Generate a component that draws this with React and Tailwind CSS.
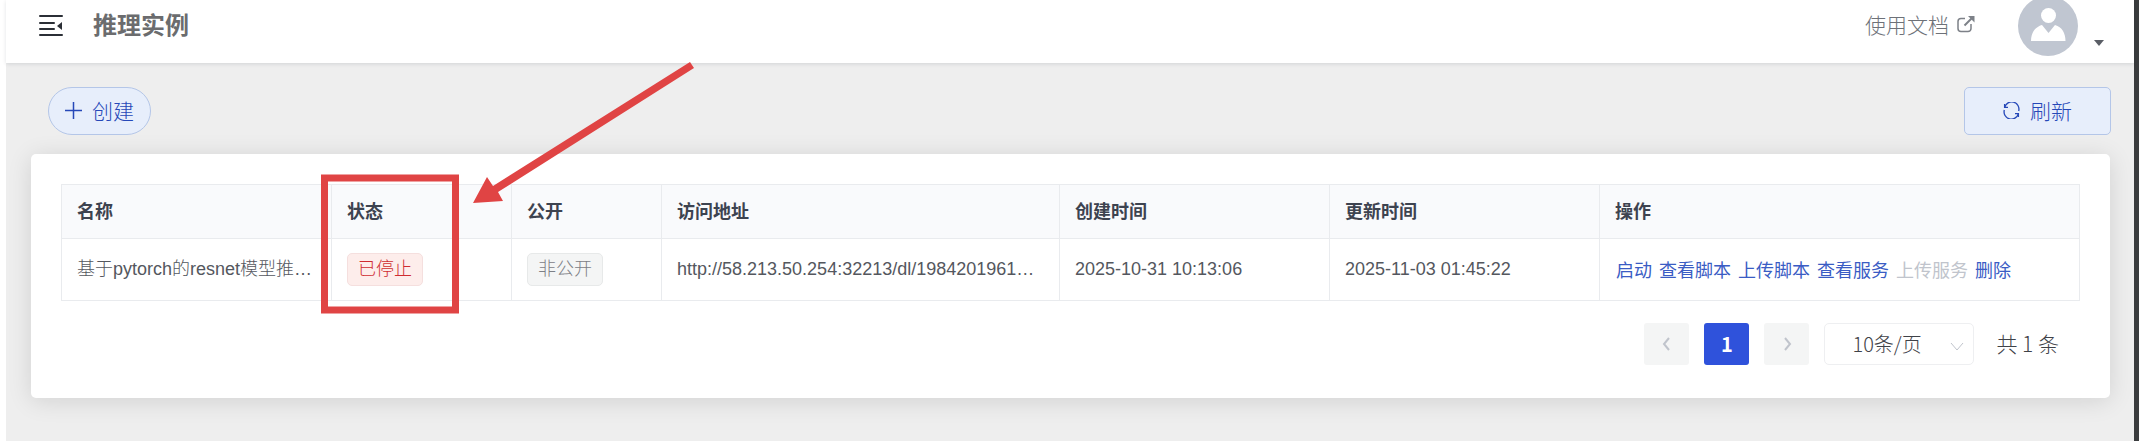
import React, { useState } from 'react';

const COLUMNS = [
  { title: '名称', width: 'w-[270px]' },
  { title: '状态', width: 'w-[180px]' },
  { title: '公开', width: 'w-[150px]' },
  { title: '访问地址', width: 'w-[398px]' },
  { title: '创建时间', width: 'w-[270px]' },
  { title: '更新时间', width: 'w-[270px]' },
  { title: '操作', width: '' },
];

const INSTANCES = [
  {
    name: '基于pytorch的resnet模型推…',
    status: '已停止',
    visibility: '非公开',
    url: 'http://58.213.50.254:32213/dl/1984201961…',
    createdAt: '2025-10-31 10:13:06',
    updatedAt: '2025-11-03 01:45:22',
  },
];

const ACTIONS = [
  { label: '启动' },
  { label: '查看脚本' },
  { label: '上传脚本' },
  { label: '查看服务' },
  { label: '上传服务', disabled: true },
  { label: '删除' },
];

const FoldIcon = () => (
  <svg viewBox="0 0 24 22" className="w-6 h-[22px]" fill="#2b2f36">
    <rect x="0" y="0" width="24" height="2" rx="1" />
    <rect x="0" y="7" width="16" height="2" rx="1" />
    <rect x="0" y="13" width="16" height="2" rx="1" />
    <rect x="0" y="19" width="24" height="2" rx="1" />
    <path d="M23 7v8l-5-4z" />
  </svg>
);

const ExternalIcon = () => (
  <svg viewBox="0 0 18 18" className="w-[18px] h-[18px]" fill="none" stroke="#7d8188" strokeWidth="1.5">
    <path d="M8 3.500H4a3 3 0 0 0-3 3v7a3 3 0 0 0 3 3h7a3 3 0 0 0 3-3V9" />
    <path d="M7.500 10.500L15 3" strokeWidth="2" />
    <path d="M11 1h6.500v6.500z" fill="#7d8188" stroke="none" />
  </svg>
);

const RefreshIcon = () => (
  <svg viewBox="0 0 18 18" className="w-[17px] h-[17px]" fill="none" stroke="currentColor" strokeWidth="1.400">
    <path d="M1.800 5.500A7.600 7.600 0 0 1 16.600 9.500" />
    <path d="M16.200 12.500A7.600 7.600 0 0 1 1.400 8.500" />
    <path d="M1.700 2v3.600h3.600" />
    <path d="M16.300 16v-3.600h-3.600" />
  </svg>
);

const Avatar = () => (
  <svg viewBox="0 0 60 60" className="w-[60px] h-[60px]">
    <circle cx="30" cy="30" r="30" fill="#c0c6d1" />
    <circle cx="30.500" cy="19.500" r="7.500" fill="#fff" />
    <path d="M13 45c0-8 4-14 11-16l6.500 8 6.500-8c7 2 10.500 8 10.500 16z" fill="#fff" />
  </svg>
);

const Chevron = ({ d, className }) => (
  <svg viewBox="0 0 14 14" className={className} fill="none" stroke="#c0c4cc">
    <path d={d} />
  </svg>
);

// red box and arrow that point at the status column
const StatusMark = () => (
  <svg className="absolute left-0 top-0 w-[700px] h-[320px] pointer-events-none" viewBox="0 0 700 320">
    <rect x="324.500" y="178" width="131" height="132" fill="none" stroke="#e04444" strokeWidth="7" />
    <path d="M690 62l4 6L498 192l5 9-30 2 14-26 6 9z" fill="#e04444" />
  </svg>
);

const Header = () => (
  <header className="relative flex items-center h-[63px] pb-3 pl-[33px] pr-[30px] bg-white overflow-hidden shadow-[0_1px_4px_rgba(0,21,41,0.12)]">
    <button aria-label="折叠菜单">
      <FoldIcon />
    </button>
    <h1 className="ml-[30px] pb-1 text-2xl leading-8 font-bold text-[#6b6c6e]">推理实例</h1>
    <a href="#docs" className="flex items-center gap-2 ml-auto pb-1 text-[21px] leading-8 font-light text-[#6d7178]">
      使用文档
      <ExternalIcon />
    </a>
    <button aria-label="用户菜单" className="flex shrink-0 items-end gap-4 ml-[43px]">
      <Avatar />
      <svg viewBox="0 0 10 6" className="w-[10px] h-[6px] mb-2.5" fill="#5a5e66">
        <path d="M0 0h10L5 6z" />
      </svg>
    </button>
  </header>
);

const Toolbar = () => (
  <div className="flex justify-between pl-[42px] pr-[23px] pt-6 text-[21px] leading-8 font-light text-[#2648b8]">
    <button className="flex items-center justify-center gap-2.5 w-[103px] h-12 pb-0.5 rounded-full border border-[#b4c6e8] bg-[#e7eefb]">
      <svg viewBox="0 0 17 17" className="w-[17px] h-[17px]" stroke="currentColor" strokeWidth="1.500">
        <path d="M8.500 0v17M0 8.500h17" />
      </svg>
      创建
    </button>
    <button className="flex items-center justify-center gap-2.5 w-[147px] h-12 pb-0.5 rounded-[5px] border border-[#b4c6e8] bg-[#e7eefb]">
      <RefreshIcon />
      刷新
    </button>
  </div>
);

const InstanceTable = () => (
  <table className="w-full table-fixed border-collapse text-left text-lg leading-[27px]">
    <thead>
      <tr className="h-[54px] bg-[#f9fafc]">
        {COLUMNS.map((col) => (
          <th key={col.title} className={`${col.width} border border-[#e9ebee] px-[15px] pb-0.5 font-bold text-[#3d4350]`}>
            {col.title}
          </th>
        ))}
      </tr>
    </thead>
    <tbody className="font-['Liberation_Sans','Noto_Sans_CJK_SC',sans-serif] font-light text-[#54575e]">
      {INSTANCES.map((item) => (
        <tr key={item.url} className="h-[62px]">
          <td className="border border-[#e9ebee] px-[15px] whitespace-nowrap">{item.name}</td>
          <td className="border border-[#e9ebee] px-[15px]">
            <span className="inline-flex items-center h-[33px] px-[10px] rounded-[5px] border border-[#f5dfde] bg-[#fdedeb] text-[#cf2c31]">
              {item.status}
            </span>
          </td>
          <td className="border border-[#e9ebee] px-[15px]">
            <span className="inline-flex items-center h-[33px] px-[10px] rounded-[5px] border border-[#e7e9e9] bg-[#f4f5f5] text-[#7d8086]">
              {item.visibility}
            </span>
          </td>
          <td className="border border-[#e9ebee] px-[15px] whitespace-nowrap">{item.url}</td>
          <td className="border border-[#e9ebee] px-[15px]">{item.createdAt}</td>
          <td className="border border-[#e9ebee] px-[15px]">{item.updatedAt}</td>
          <td className="border border-[#e9ebee] px-4">
            <div className="flex gap-[7px] pt-1 font-normal whitespace-nowrap">
              {ACTIONS.map((action) => (
                <button
                  key={action.label}
                  disabled={action.disabled}
                  className="text-[#3a5cc4] disabled:text-[#c0c4cc]"
                >
                  {action.label}
                </button>
              ))}
            </div>
          </td>
        </tr>
      ))}
    </tbody>
  </table>
);

const Pagination = () => {
  const [pageSize, setPageSize] = useState('10');

  return (
    <div className="flex items-center justify-end mt-[22px] pr-[21px] text-xl leading-8 font-light text-[#3f4248]">
      <button disabled aria-label="上一页" className="flex items-center justify-center w-[45px] h-[42px] rounded-[3px] bg-[#f4f5f5]">
        <Chevron d="M9 1L4 7l5 6" className="w-3.5 h-3.5 stroke-2" />
      </button>
      <button className="w-[45px] h-[42px] ml-[15px] rounded-[3px] bg-[#2f52db] font-bold text-white">1</button>
      <button disabled aria-label="下一页" className="flex items-center justify-center w-[45px] h-[42px] ml-[15px] rounded-[3px] bg-[#f4f5f5]">
        <Chevron d="M5 1l5 6-5 6" className="w-3.5 h-3.5 stroke-2" />
      </button>
      <div className="relative ml-[15px]">
        <select
          aria-label="每页条数"
          value={pageSize}
          onChange={(e) => setPageSize(e.target.value)}
          className="appearance-none w-[150px] h-[42px] pl-[27px] rounded-[5px] border border-[#eeeff1] bg-white"
        >
          <option value="10">10条/页</option>
          <option value="20">20条/页</option>
          <option value="50">50条/页</option>
        </select>
        <Chevron d="M1 4l6 7 6-7" className="absolute right-2.5 top-4 w-3.5 h-3.5 pointer-events-none" />
      </div>
      <span className="ml-[22px] pb-0.5 text-[21px]">共 1 条</span>
    </div>
  );
};

const App = () => (
  <div className="relative flex min-h-screen pl-1.5 bg-white font-['Noto_Sans_CJK_SC',sans-serif]">
    <div className="flex-1 min-w-0 bg-[#eeeeee]">
      <Header />
      <Toolbar />
      <main className="mt-[19px] ml-[25px] mr-6 rounded-[5px] bg-white px-[30px] pt-[30px] pb-[33px] shadow-[0_3px_24px_rgba(0,0,0,0.12)]">
        <InstanceTable />
        <Pagination />
      </main>
    </div>
    <div className="w-[5px] bg-[#3a3c3e]" />
    <StatusMark />
  </div>
);

export default App;
